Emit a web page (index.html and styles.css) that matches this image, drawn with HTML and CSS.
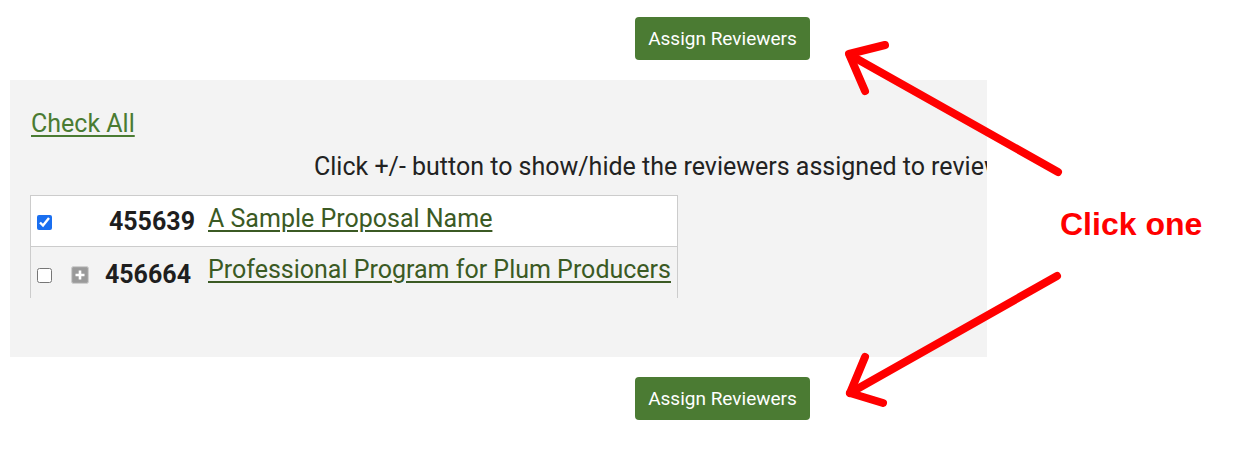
FILE: index.html
```html
<!DOCTYPE html>
<html>
<head>
<meta charset="utf-8">
<link rel="stylesheet" href="styles.css">
</head>
<body>
<div class="page">
  <div class="action-row action-top">
    <button class="btn">Assign Reviewers</button>
  </div>
  <div class="panel">
    <a class="check-all" href="#">Check All</a>
    <div class="hint">Click +/- button to show/hide the reviewers assigned to review each proposal.</div>
    <div class="list">
      <div class="row row-first">
        <div class="cb-cell"><input type="checkbox" class="cb" checked></div>
        <div class="id-cell"><span class="pid">455639</span></div>
        <div class="name-cell"><a href="#" class="pname">A Sample Proposal Name</a></div>
      </div>
      <div class="row row-second">
        <div class="cb-cell"><input type="checkbox" class="cb"></div>
        <div class="id-cell">
          <svg class="toggle" width="18" height="18" viewBox="0 0 18 18">
            <rect x="0.5" y="0.5" width="17" height="17" rx="2" fill="#a3a3a3" stroke="#cfcfcf"/>
            <rect x="2" y="2" width="14" height="14" rx="1" fill="#9a9a9a"/>
            <path d="M9 4.5v9M4.5 9h9" stroke="#ffffff" stroke-width="2.6"/>
          </svg>
          <span class="pid">456664</span>
        </div>
        <div class="name-cell"><a href="#" class="pname">Professional Program for Plum Producers</a></div>
      </div>
    </div>
  </div>
  <div class="action-row action-bottom">
    <button class="btn">Assign Reviewers</button>
  </div>
</div>
<svg class="annotations" width="1245" height="449" viewBox="0 0 1245 449">
  <g fill="none" stroke="#ff0000" stroke-width="8" stroke-linecap="round" stroke-linejoin="round">
    <path d="M1058 172 L850 55"/>
    <path d="M885 45 L849 54 L865 91"/>
    <path d="M1057 276 L850 393"/>
    <path d="M865 357 L850 393 L883 403"/>
  </g>
  <text x="1060" y="235" class="note">Click one</text>
</svg>
</body>
</html>
```
FILE: styles.css
```css
html, body {
  margin: 0;
  padding: 0;
  background: #ffffff;
}
body {
  font-family: Roboto, "Liberation Sans", Arial, sans-serif;
  position: relative;
  width: 1245px;
  height: 449px;
  overflow: hidden;
}
.page {
  display: flex;
  flex-direction: column;
}
.action-row {
  display: flex;
  padding-left: 635px;
}
.action-top {
  height: 80px;
  padding-top: 17px;
  box-sizing: border-box;
}
.action-bottom {
  padding-top: 20px;
}
.btn {
  width: 175px;
  height: 43px;
  background: #4b7b33;
  color: #ffffff;
  border: none;
  border-radius: 4px;
  font-family: Roboto, "Liberation Sans", Arial, sans-serif;
  font-size: 19px;
  padding: 0;
  cursor: pointer;
}
.panel {
  margin-left: 10px;
  width: 977px;
  height: 277px;
  box-sizing: border-box;
  background: #f3f3f3;
  padding: 29px 0 0 20px;
  overflow: hidden;
  display: flex;
  flex-direction: column;
  align-items: flex-start;
}
.check-all {
  font-size: 25px;
  line-height: 29px;
  color: #4a7b32;
  text-decoration: underline;
  text-underline-offset: 3px;
  margin-left: 1px;
}
.hint {
  margin-top: 14px;
  padding-left: 284px;
  font-size: 25px;
  line-height: 29px;
  color: #222222;
  white-space: nowrap;
}
.list {
  margin-top: 14px;
  width: 648px;
  height: 103px;
  box-sizing: border-box;
  border: 1px solid #cccccc;
  border-bottom: none;
  overflow: hidden;
}
.row {
  display: flex;
  align-items: flex-start;
}
.row-first {
  height: 51px;
  box-sizing: border-box;
  background: #ffffff;
  border-bottom: 1px solid #cccccc;
}
.row-second {
  height: 60px;
  background: #f3f3f3;
}
.cb-cell {
  width: 30px;
  padding-left: 6px;
  box-sizing: border-box;
}
.cb {
  width: 15px;
  height: 15px;
  margin: 0;
  accent-color: #1a6ff0;
}
.row-first .cb { margin-top: 19px; }
.row-second .cb { margin-top: 21px; }
.id-cell {
  width: 139px;
  display: flex;
  align-items: flex-start;
  box-sizing: border-box;
}
.row-first .id-cell {
  padding-right: 5px;
  justify-content: flex-end;
}
.row-second .id-cell {
  padding-left: 10px;
  padding-right: 9px;
}
.toggle {
  margin-top: 19px;
  flex: none;
}
.pid {
  font-size: 25px;
  line-height: 29px;
  font-weight: 700;
  color: #1e1e1e;
  margin-left: auto;
}
.row-first .pid { margin-top: 11px; }
.row-second .pid { margin-top: 13px; }
.name-cell {
  padding-left: 8px;
  padding-top: 8px;
  white-space: nowrap;
}
.pname {
  font-size: 25px;
  line-height: 29px;
  color: #3b5a24;
  text-decoration: underline;
  text-underline-offset: 3px;
}
.annotations {
  position: absolute;
  left: 0;
  top: 0;
  pointer-events: none;
}
.note {
  font-family: "Liberation Sans", Arial, sans-serif;
  font-weight: 700;
  font-size: 32px;
  fill: #ff0000;
}
```
